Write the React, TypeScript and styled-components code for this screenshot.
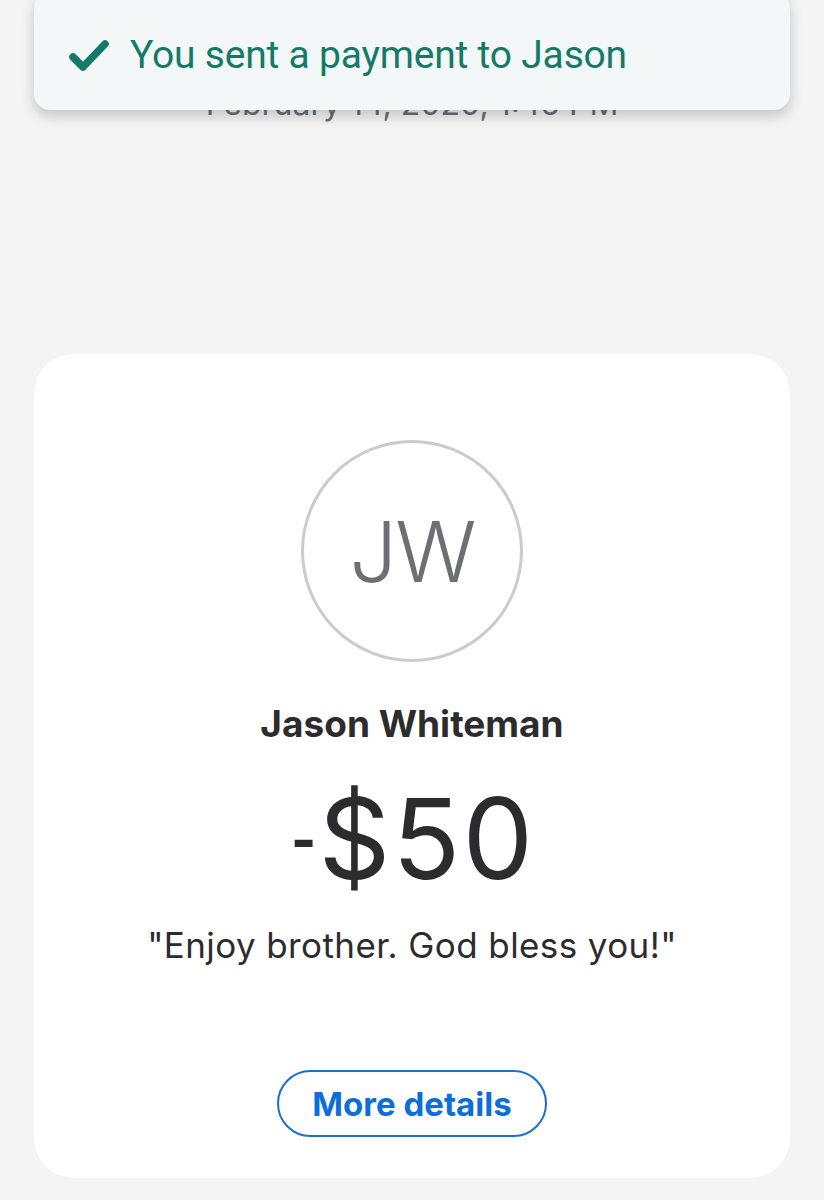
import styled, { createGlobalStyle } from 'styled-components';

const GlobalStyle = createGlobalStyle`
  html, body {
    margin: 0;
    padding: 0;
    background: #f4f4f4;
  }
  body {
    font-family: Inter, "Liberation Sans", sans-serif;
    -webkit-font-smoothing: antialiased;
  }
`;

const Page = styled.main`
  position: relative;
  min-height: 1200px;
  overflow: hidden;
  background: #f4f4f4;
`;

const Toast = styled.div`
  position: absolute;
  top: -8px;
  left: 34px;
  right: 34px;
  height: 118px;
  display: flex;
  align-items: center;
  gap: 20px;
  padding: 8px 0 0 34px;
  box-sizing: border-box;
  background: #f3f7f7;
  border-radius: 16px;
  box-shadow: 0 6px 14px rgba(0, 0, 0, 0.2);
  z-index: 2;
`;

const ToastText = styled.span`
  font-family: Roboto, "Liberation Sans", sans-serif;
  font-size: 39px;
  line-height: 44px;
  color: #137a67;
  letter-spacing: -0.2px;
`;

const DateLine = styled.div`
  padding-top: 84px;
  text-align: center;
  font-size: 32px;
  line-height: 40px;
  color: #6d6d72;
`;

const Card = styled.section`
  margin: 230px 34px 0;
  height: 824px;
  box-sizing: border-box;
  padding-top: 86px;
  background: #ffffff;
  border-radius: 40px;
  display: flex;
  flex-direction: column;
  align-items: center;
`;

const Avatar = styled.div`
  width: 222px;
  height: 222px;
  box-sizing: border-box;
  border-radius: 50%;
  border: 3px solid #cbcbcb;
  display: flex;
  align-items: center;
  justify-content: center;
  font-size: 84px;
  font-weight: 300;
  color: #6e6e75;
  letter-spacing: -2px;
`;

const Name = styled.h2`
  margin: 40px 0 0;
  font-size: 37px;
  line-height: 44px;
  font-weight: 700;
  color: #2c2c2e;
`;

const Amount = styled.div`
  display: flex;
  align-items: baseline;
  margin-top: 32px;
  margin-right: 24px;
  font-size: 112px;
  line-height: 120px;
  font-weight: 400;
  color: #2c2c2e;
  letter-spacing: 2px;
`;

const Minus = styled.span`
  display: inline-block;
  transform: scaleX(0.5) scaleY(0.8);
  transform-origin: right center;
  letter-spacing: 0;
  margin-right: 2px;
`;

const Note = styled.p`
  margin: 26px 0 0;
  font-size: 35px;
  line-height: 42px;
  color: #2c2c2e;
  letter-spacing: 0.4px;
`;

const DetailsButton = styled.button`
  margin-top: 104px;
  width: 270px;
  height: 67px;
  border-radius: 34px;
  border: 2px solid #1b6fcf;
  background: #ffffff;
  color: #0a6fd8;
  font-family: Inter, "Liberation Sans", sans-serif;
  font-size: 33px;
  font-weight: 700;
  cursor: pointer;
`;

function CheckIcon() {
  return (
    <svg width="42" height="34" viewBox="0 0 42 34" aria-hidden>
      <polyline
        points="5,19 15,29 37,6"
        fill="none"
        stroke="#137a67"
        strokeWidth="7.5"
        strokeLinecap="round"
        strokeLinejoin="round"
      />
    </svg>
  );
}

export default function App() {
  return (
    <Page>
      <GlobalStyle />
      <Toast>
        <CheckIcon />
        <ToastText>You sent a payment to Jason</ToastText>
      </Toast>
      <DateLine>February 14, 2020, 1:45 PM</DateLine>
      <Card>
        <Avatar>JW</Avatar>
        <Name>Jason Whiteman</Name>
        <Amount>
          <Minus>-</Minus>
          <span>$50</span>
        </Amount>
        <Note>"Enjoy brother. God bless you!"</Note>
        <DetailsButton>More details</DetailsButton>
      </Card>
    </Page>
  );
}
